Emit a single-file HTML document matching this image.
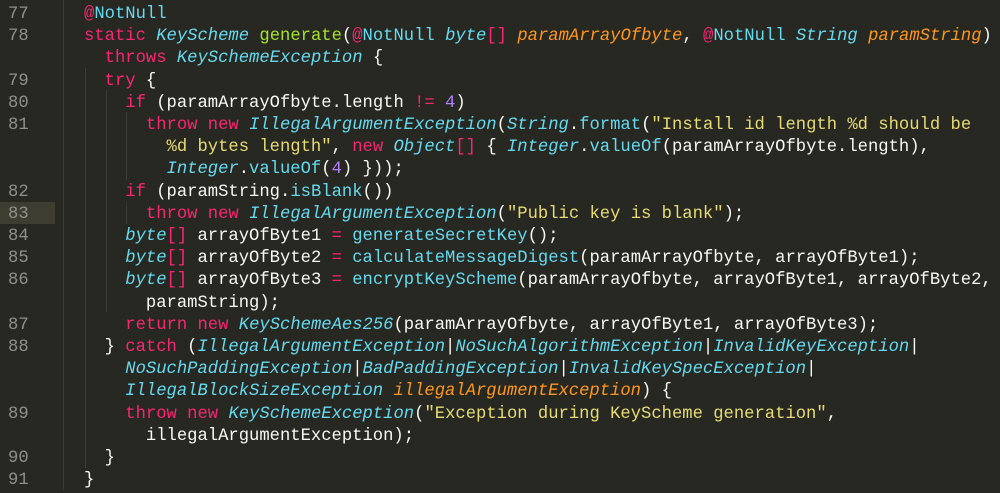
<!DOCTYPE html><html><head><style>
body{margin:0;background:#272822;width:1000px;height:490px;overflow:hidden;position:relative;font-family:"Liberation Mono",monospace;font-size:17.2px;}
#w{position:absolute;left:0;top:3px;width:1000px;height:490px}
.r{position:absolute;left:0;width:1000px;height:22.2px;line-height:22.2px;white-space:pre;color:#f8f8f2}
.n{position:absolute;left:8px;color:#8f908a;}
.c{position:absolute;left:84px;}
.hl{position:absolute;left:0;top:202px;width:55px;height:22px;background:#3e3d32}
.g{position:absolute;width:1px;background:#3b3c35}
.k{color:#f92672}.t{color:#66d9ef;font-style:italic}.f{color:#a6e22e}.s{color:#e6db74}.m{color:#ae81ff}.p{color:#fd971f;font-style:italic}.a{color:#66d9ef}
</style></head><body>
<div class="hl"></div>
<div class="g" style="left:63px;top:0;height:490px"></div>
<div class="g" style="left:85px;top:68px;height:400px"></div>
<div class="g" style="left:106px;top:90px;height:222px"></div>
<div class="g" style="left:126px;top:112px;height:68px"></div>
<div class="g" style="left:126px;top:202px;height:22px"></div>
<div id="w">
<div class="r" style="top:1px"><span class="n">77</span><span class="c"><span class="k">@</span><span class="a">NotNull</span></span></div>
<div class="r" style="top:23.2px"><span class="n">78</span><span class="c"><span class="k">static</span> <span class="t">KeyScheme</span> <span class="f">generate</span>(<span class="k">@</span><span class="a">NotNull</span> <span class="t">byte</span><span class="k">[]</span> <span class="p">paramArrayOfbyte</span>, <span class="k">@</span><span class="a">NotNull</span> <span class="t">String</span> <span class="p">paramString</span>)</span></div>
<div class="r" style="top:45.4px"><span class="c">  <span class="k">throws</span> <span class="t">KeySchemeException</span> {</span></div>
<div class="r" style="top:67.6px"><span class="n">79</span><span class="c">  <span class="k">try</span> {</span></div>
<div class="r" style="top:89.8px"><span class="n">80</span><span class="c">    <span class="k">if</span> (paramArrayOfbyte.length <span class="k">!=</span> <span class="m">4</span>)</span></div>
<div class="r" style="top:112px"><span class="n">81</span><span class="c">      <span class="k">throw</span> <span class="k">new</span> <span class="t">IllegalArgumentException</span>(<span class="t">String</span>.<span class="a">format</span>(<span class="s">"Install id length %d should be</span></span></div>
<div class="r" style="top:134.2px"><span class="c"><span class="s">        %d bytes length"</span>, <span class="k">new</span> <span class="t">Object</span><span class="k">[]</span> { <span class="t">Integer</span>.<span class="a">valueOf</span>(paramArrayOfbyte.length),</span></div>
<div class="r" style="top:156.4px"><span class="c">        <span class="t">Integer</span>.<span class="a">valueOf</span>(<span class="m">4</span>) }));</span></div>
<div class="r" style="top:178.6px"><span class="n">82</span><span class="c">    <span class="k">if</span> (paramString.<span class="a">isBlank</span>())</span></div>
<div class="r" style="top:200.8px"><span class="n">83</span><span class="c">      <span class="k">throw</span> <span class="k">new</span> <span class="t">IllegalArgumentException</span>(<span class="s">"Public key is blank"</span>);</span></div>
<div class="r" style="top:223px"><span class="n">84</span><span class="c">    <span class="t">byte</span><span class="k">[]</span> arrayOfByte1 <span class="k">=</span> <span class="a">generateSecretKey</span>();</span></div>
<div class="r" style="top:245.2px"><span class="n">85</span><span class="c">    <span class="t">byte</span><span class="k">[]</span> arrayOfByte2 <span class="k">=</span> <span class="a">calculateMessageDigest</span>(paramArrayOfbyte, arrayOfByte1);</span></div>
<div class="r" style="top:267.4px"><span class="n">86</span><span class="c">    <span class="t">byte</span><span class="k">[]</span> arrayOfByte3 <span class="k">=</span> <span class="a">encryptKeyScheme</span>(paramArrayOfbyte, arrayOfByte1, arrayOfByte2,</span></div>
<div class="r" style="top:289.6px"><span class="c">      paramString);</span></div>
<div class="r" style="top:311.8px"><span class="n">87</span><span class="c">    <span class="k">return</span> <span class="k">new</span> <span class="t">KeySchemeAes256</span>(paramArrayOfbyte, arrayOfByte1, arrayOfByte3);</span></div>
<div class="r" style="top:334px"><span class="n">88</span><span class="c">  } <span class="k">catch</span> (<span class="t">IllegalArgumentException</span>|<span class="t">NoSuchAlgorithmException</span>|<span class="t">InvalidKeyException</span>|</span></div>
<div class="r" style="top:356.2px"><span class="c">    <span class="t">NoSuchPaddingException</span>|<span class="t">BadPaddingException</span>|<span class="t">InvalidKeySpecException</span>|</span></div>
<div class="r" style="top:378.4px"><span class="c">    <span class="t">IllegalBlockSizeException</span> <span class="p">illegalArgumentException</span>) {</span></div>
<div class="r" style="top:400.6px"><span class="n">89</span><span class="c">    <span class="k">throw</span> <span class="k">new</span> <span class="t">KeySchemeException</span>(<span class="s">"Exception during KeyScheme generation"</span>,</span></div>
<div class="r" style="top:422.8px"><span class="c">      illegalArgumentException);</span></div>
<div class="r" style="top:445px"><span class="n">90</span><span class="c">  }</span></div>
<div class="r" style="top:467.2px"><span class="n">91</span><span class="c">}</span></div>
</div>
</body></html>
